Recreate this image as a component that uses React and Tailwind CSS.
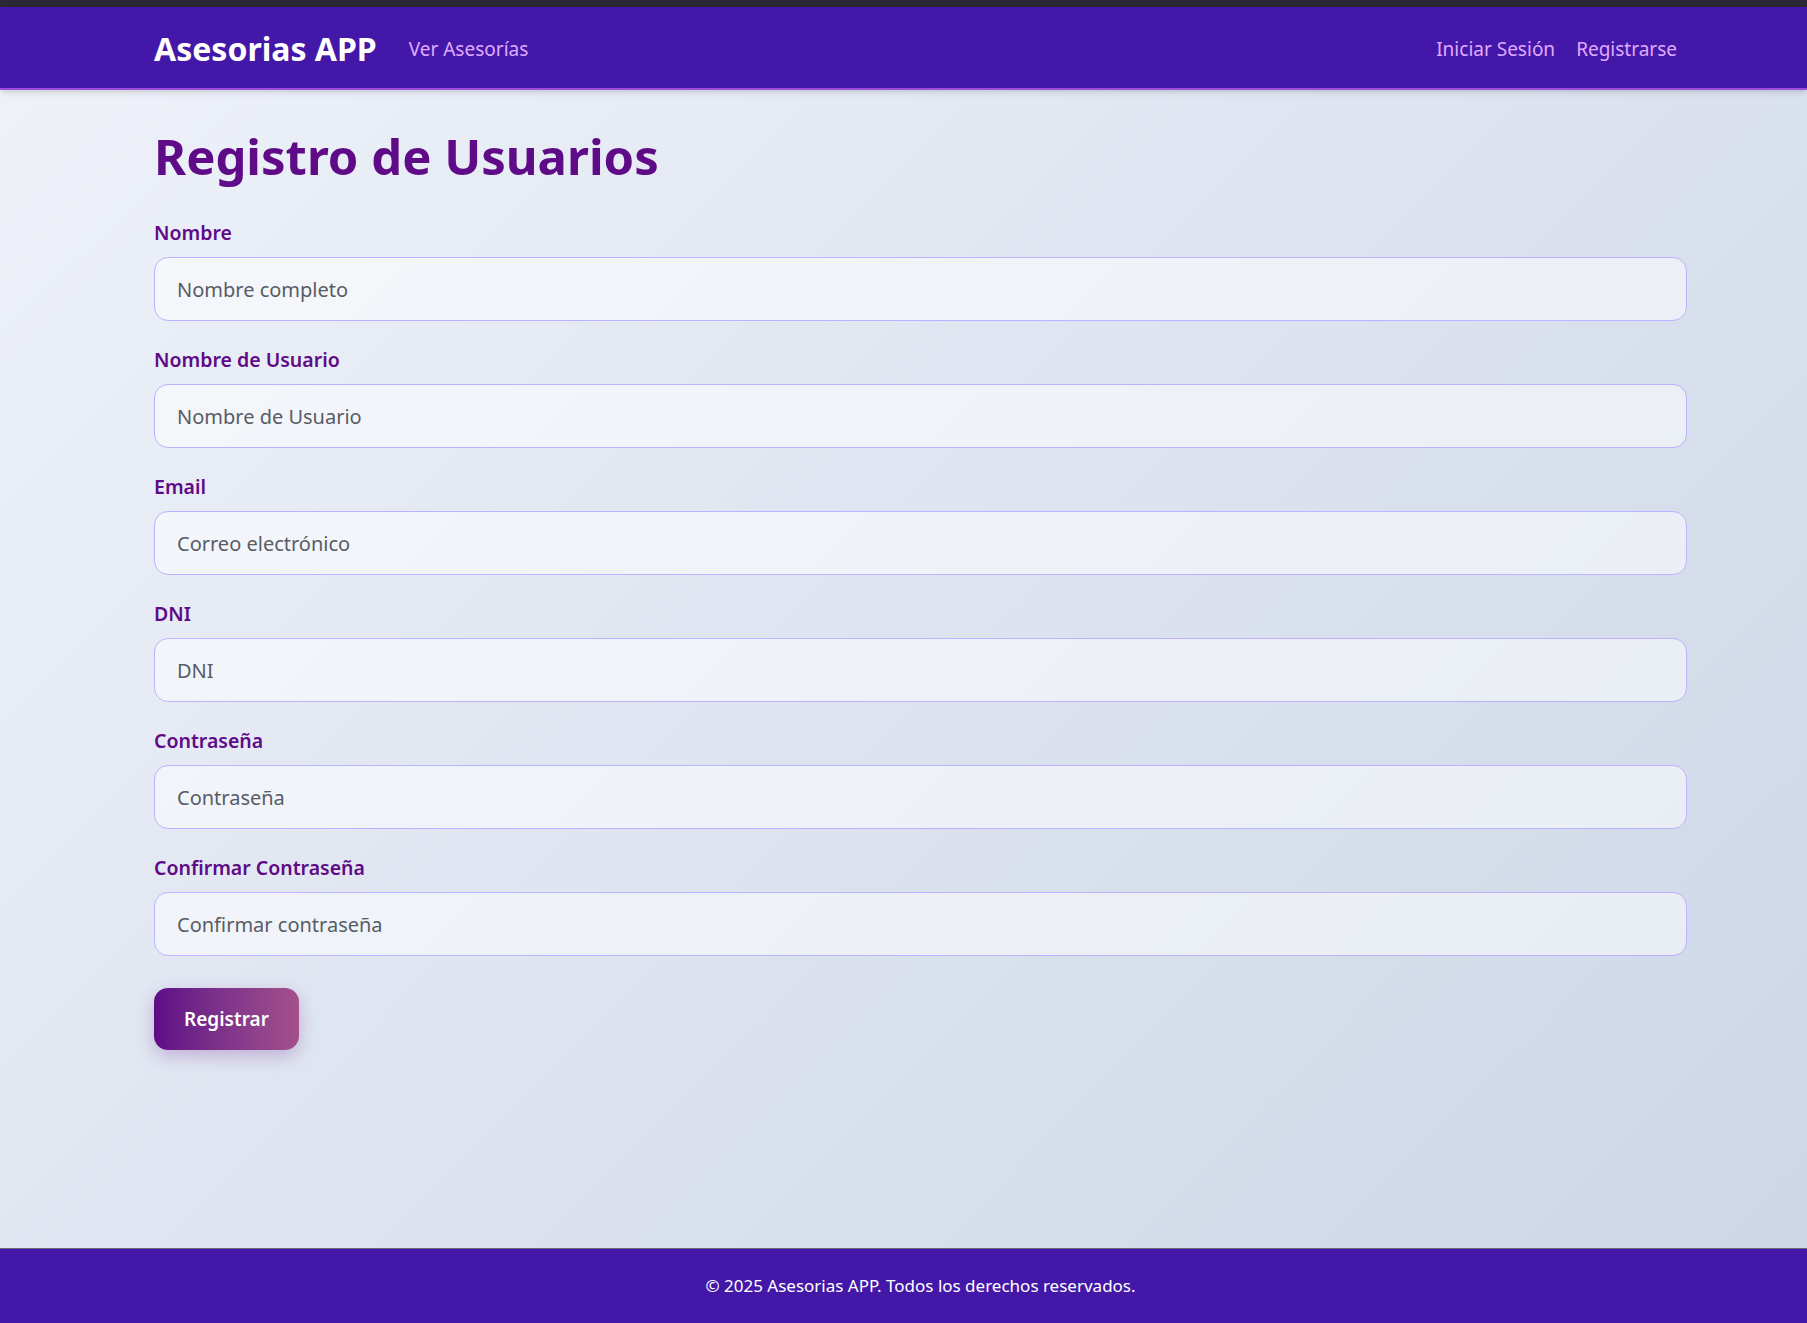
import React from 'react';

// --- Small pieces ---

const NavLink = ({ children }) => (
    <a href="#" className="pt-[3px] text-[19px] text-[#e0aaff] hover:text-white">
        {children}
    </a>
);

const Field = ({ label, type = 'text', placeholder }) => (
    <div className="flex flex-col">
        <label className="text-[19.5px] leading-[30px] font-semibold text-[#5f0a87]">{label}</label>
        <input
            type={type}
            placeholder={placeholder}
            className="mt-[9px] mb-[24px] h-[64px] w-full rounded-[14px] border border-[#bdb2ff] bg-white/50 px-[22px] text-[20px] text-[#333] placeholder:text-[#575c66] outline-none"
        />
    </div>
);

const fields = [
    { label: 'Nombre', placeholder: 'Nombre completo' },
    { label: 'Nombre de Usuario', placeholder: 'Nombre de Usuario' },
    { label: 'Email', placeholder: 'Correo electrónico', type: 'email' },
    { label: 'DNI', placeholder: 'DNI' },
    { label: 'Contraseña', placeholder: 'Contraseña', type: 'password' },
    { label: 'Confirmar Contraseña', placeholder: 'Confirmar contraseña', type: 'password' },
];

// --- Main Component ---

export default function App() {
    return (
        <div className="flex min-h-screen flex-col bg-linear-135 from-[#eff2f9] to-[#ccd6e6] font-['Noto_Sans',sans-serif]">
            <div className="h-[7px] bg-[#2b2833]" />

            {/* --- NAVBAR --- */}
            <nav className="h-[83px] border-b-2 border-[#9d4edd] bg-[#4318a8] shadow-md">
                <div className="ml-[154px] flex h-full w-[1533px] items-center justify-between pr-[10px]">
                    <div className="flex items-center gap-[32px]">
                        <span className="pt-[2px] text-[32px] font-bold text-white">Asesorias APP</span>
                        <NavLink>Ver Asesorías</NavLink>
                    </div>
                    <div className="flex items-center gap-[21px]">
                        <NavLink>Iniciar Sesión</NavLink>
                        <NavLink>Registrarse</NavLink>
                    </div>
                </div>
            </nav>

            {/* --- FORM --- */}
            <main className="flex-1">
                <div className="ml-[154px] w-[1533px] pt-[30px] pb-10">
                    <h1 className="mb-[26px] text-[49px] leading-[72px] font-bold text-[#5f0a87]">Registro de Usuarios</h1>
                    <form onSubmit={(e) => e.preventDefault()}>
                        {fields.map((f) => (
                            <Field key={f.label} {...f} />
                        ))}
                        <button
                            type="submit"
                            className="mt-[8px] h-[62px] rounded-[14px] bg-linear-to-r from-[#5f0a87] to-[#a4508b] px-[30px] text-[19px] font-semibold text-white shadow-[0_6px_18px_rgba(95,10,135,0.25)]"
                        >
                            Registrar
                        </button>
                    </form>
                </div>
            </main>

            {/* --- FOOTER --- */}
            <footer className="h-[75px] border-t border-[#6b6878] bg-[#4318a8]">
                <div className="ml-[154px] flex h-full w-[1533px] items-center justify-center">
                    <p className="text-[17px] text-white">© 2025 Asesorias APP. Todos los derechos reservados.</p>
                </div>
            </footer>
        </div>
    );
}
